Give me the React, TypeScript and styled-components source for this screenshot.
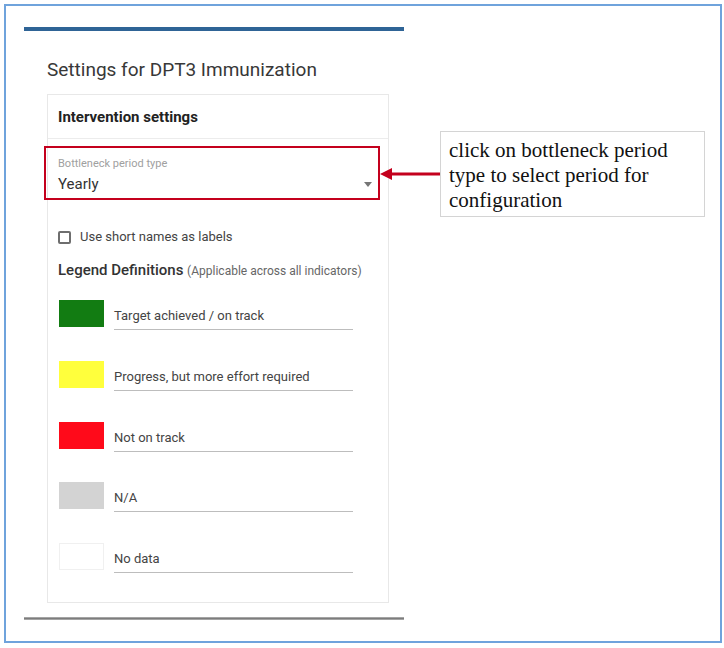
import React from "react";
import styled, { createGlobalStyle } from "styled-components";

const GlobalStyle = createGlobalStyle`
  html, body {
    margin: 0;
    padding: 0;
    background: #ffffff;
  }
  body {
    font-family: Roboto, "Liberation Sans", sans-serif;
  }
`;

const Page = styled.div`
  position: relative;
  display: flow-root;
  width: 724px;
  height: 648px;
`;

const Frame = styled.div`
  box-sizing: border-box;
  margin: 4px 0 0 4px;
  width: 718px;
  height: 639px;
  border: 2px solid #6fa3dc;
  padding: 21px 0 0 18px;
`;

const Panel = styled.div`
  width: 380px;
  display: flex;
  flex-direction: column;
`;

const TopBar = styled.div`
  height: 4px;
  background: #2f6496;
`;

const Title = styled.div`
  margin: 27px 0 0 23px;
  font-size: 19px;
  line-height: 24px;
  color: #383838;
`;

const Card = styled.div`
  margin: 12px 0 0 23px;
  width: 342px;
  box-sizing: border-box;
  border: 1px solid #e8e8e8;
`;

const CardHeader = styled.div`
  height: 43px;
  display: flex;
  align-items: center;
  padding: 0 10px;
  font-size: 15px;
  font-weight: 700;
  color: #222;
  border-bottom: 1px solid #ececec;
`;

const CardBody = styled.div`
  padding: 18px 10px 29px 10px;
  display: flex;
  flex-direction: column;
`;

const SelectField = styled.div`
  position: relative;
  width: 317px;
  padding-bottom: 6px;
  border-bottom: 1px solid #c8c8c8;
`;

const SelectLabel = styled.div`
  font-size: 11px;
  line-height: 13px;
  color: #a0a0a0;
`;

const SelectValue = styled.div`
  margin-top: 5px;
  display: flex;
  justify-content: space-between;
  align-items: center;
  font-size: 15px;
  line-height: 18px;
  color: #333;
`;

const Caret = styled.span`
  width: 0;
  height: 0;
  margin-right: 3px;
  border-left: 4px solid transparent;
  border-right: 4px solid transparent;
  border-top: 5px solid #767676;
`;

const Highlight = styled.div`
  position: absolute;
  top: -11px;
  left: -14px;
  right: -5px;
  bottom: -1px;
  border: 2px solid #c4001d;
  pointer-events: none;
`;

const CheckRow = styled.label`
  margin-top: 30px;
  height: 14px;
  display: flex;
  align-items: center;
  gap: 9px;
  font-size: 13px;
  line-height: 14px;
  color: #444;
`;

const CheckBox = styled.span`
  box-sizing: border-box;
  width: 13px;
  height: 13px;
  border: 2px solid #6e6e6e;
  border-radius: 2px;
`;

const LegendTitle = styled.div`
  margin-top: 18px;
  font-size: 15px;
  line-height: 16px;
  font-weight: 500;
  color: #333;
`;

const LegendNote = styled.span`
  font-size: 12px;
  font-weight: 400;
  color: #666;
`;

const LegendList = styled.div`
  margin-top: 21px;
  display: flex;
  flex-direction: column;
  gap: 30.75px;
`;

const LegendRow = styled.div`
  display: flex;
  align-items: flex-start;
  height: 30px;
`;

const Swatch = styled.div<{ $color: string }>`
  box-sizing: border-box;
  margin-left: 1px;
  width: 45px;
  height: 27px;
  background: ${(p) => p.$color};
  border: 1px solid ${(p) => (p.$color === "#ffffff" ? "#f0f0f0" : p.$color)};
`;

const LegendField = styled.div`
  box-sizing: border-box;
  margin-left: 10px;
  width: 239px;
  height: 30px;
  padding-top: 8px;
  border-bottom: 1px solid #bdbdbd;
  font-size: 13px;
  line-height: 15px;
  color: #444;
`;

const BottomRule = styled.div`
  margin-top: 14px;
  height: 3px;
  background: linear-gradient(#b8b8b8, #7c7c7c, #b8b8b8);
`;

const Annotation = styled.div`
  position: absolute;
  left: 380px;
  top: 131px;
  display: flex;
  align-items: center;
`;

const Callout = styled.div`
  box-sizing: border-box;
  width: 265px;
  height: 86px;
  padding: 6px 8px;
  border: 1px solid #d4d4d4;
  background: #fff;
  font-family: "Liberation Serif", "Times New Roman", serif;
  font-size: 21px;
  line-height: 25px;
  color: #111;
`;

const legend = [
  { color: "#127c12", label: "Target achieved / on track" },
  { color: "#ffff3c", label: "Progress, but more effort required" },
  { color: "#ff0a1a", label: "Not on track" },
  { color: "#d3d3d3", label: "N/A" },
  { color: "#ffffff", label: "No data" },
];

export default function App() {
  return (
    <Page>
      <GlobalStyle />
      <Frame>
        <Panel>
          <TopBar />
          <Title>Settings for DPT3 Immunization</Title>
          <Card>
            <CardHeader>Intervention settings</CardHeader>
            <CardBody>
              <SelectField>
                <SelectLabel>Bottleneck period type</SelectLabel>
                <SelectValue>
                  <span>Yearly</span>
                  <Caret />
                </SelectValue>
                <Highlight />
              </SelectField>
              <CheckRow>
                <CheckBox />
                <span>Use short names as labels</span>
              </CheckRow>
              <LegendTitle>
                Legend Definitions <LegendNote>(Applicable across all indicators)</LegendNote>
              </LegendTitle>
              <LegendList>
                {legend.map((l) => (
                  <LegendRow key={l.label}>
                    <Swatch $color={l.color} />
                    <LegendField>{l.label}</LegendField>
                  </LegendRow>
                ))}
              </LegendList>
            </CardBody>
          </Card>
          <BottomRule />
        </Panel>
      </Frame>
      <Annotation>
        <svg width="60" height="14" viewBox="0 0 60 14">
          <line x1="9" y1="7" x2="60" y2="7" stroke="#c4001d" strokeWidth="3" />
          <polygon points="0,7 12,1 12,13" fill="#c4001d" />
        </svg>
        <Callout>
          click on bottleneck period type to select period for configuration
        </Callout>
      </Annotation>
    </Page>
  );
}
